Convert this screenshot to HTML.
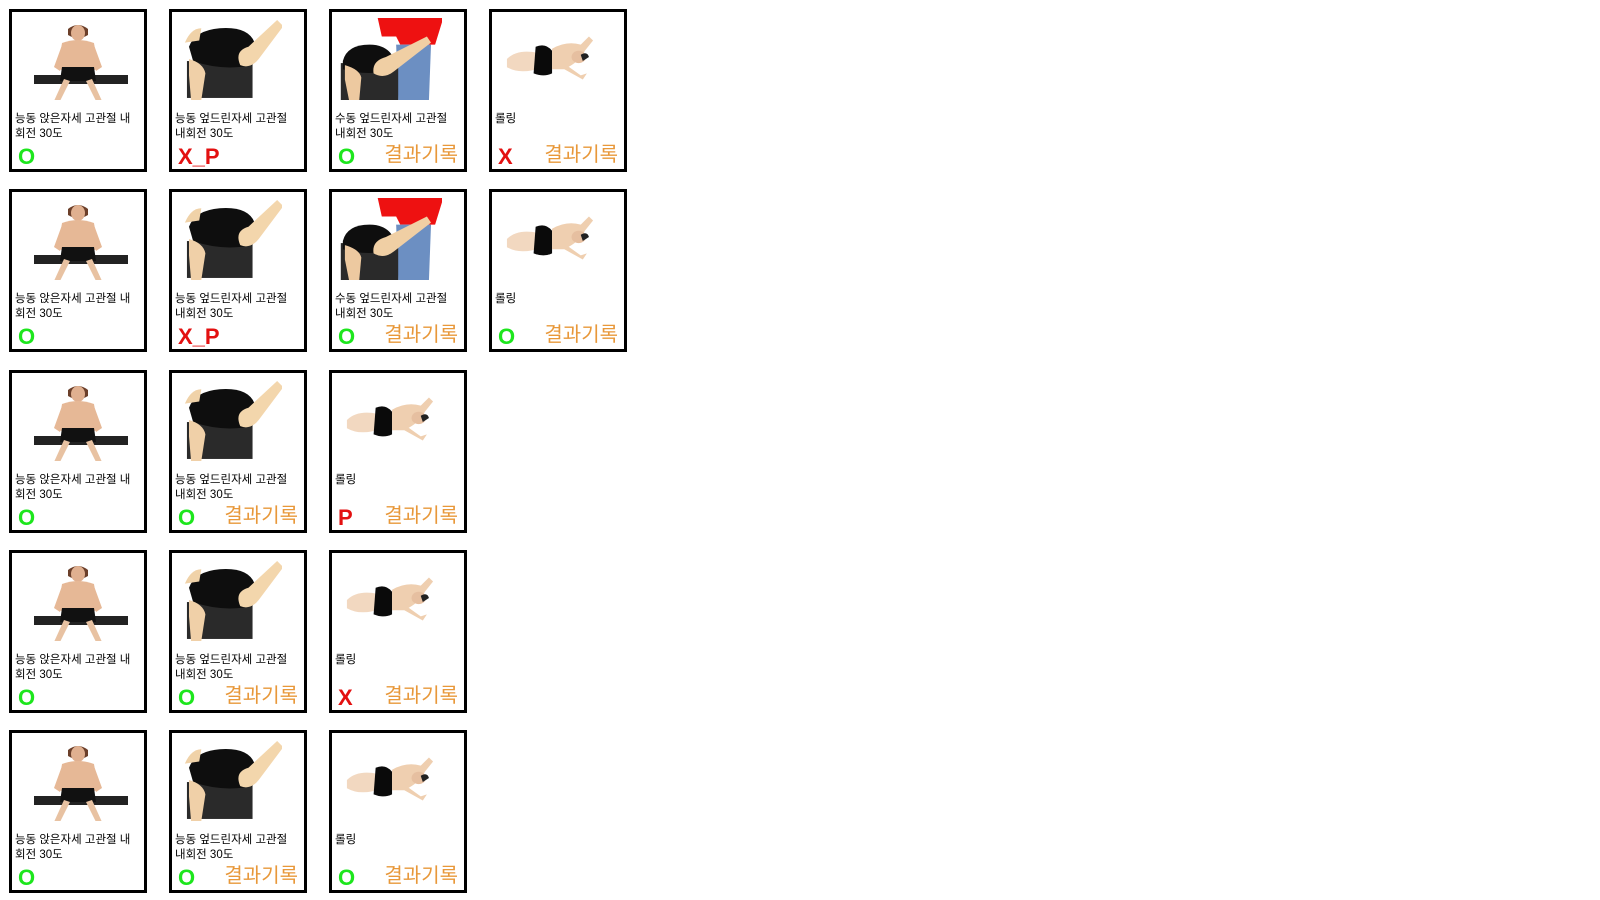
<!DOCTYPE html>
<html><head><meta charset="utf-8"><style>
body{margin:0;background:#fff;width:1600px;height:900px;position:relative;overflow:hidden;font-family:"Liberation Sans","Noto Sans CJK KR","NanumGothic",sans-serif}
.c{position:absolute;width:132px;height:157px;border:3px solid #000;background:#fff}
.c svg{position:absolute;left:2px;top:3px}
.t{position:absolute;left:3px;top:100px;font-size:11.5px;line-height:15px;color:#000;white-space:nowrap}
.s{position:absolute;left:6px;top:134px;font-size:22px;font-weight:bold;line-height:22px}
.g{color:#1de61d}.r{color:#e31010}
.k{position:absolute;right:6px;top:132px;font-size:20px;line-height:22px;color:#e8983a}
</style></head><body>
<svg width="0" height="0" style="position:absolute">
<defs>
<symbol id="A" viewBox="0 0 100 80">
<rect x="6" y="56" width="94" height="9" fill="#222"/>
<path d="M40 10 q10-8 20 0 l0 6 q-10 6 -20 0z" fill="#6b3f2a"/>
<ellipse cx="50" cy="14" rx="7" ry="8" fill="#e0b090"/>
<path d="M34 24 q16-6 32 0 l4 26 q-20 6 -40 0z" fill="#e6b896"/>
<path d="M34 26 l-8 22 6 4 6-18z M66 26 l8 22 -6 4 -6-18z" fill="#e6b896"/>
<path d="M34 48 h32 l2 14 h-36z" fill="#111"/>
<path d="M36 60 l-10 22 6 0 10-20z M64 60 l10 22 -6 0 -10-20z" fill="#e8c2a2"/>
</symbol>
<symbol id="B" viewBox="0 0 100 80">
<rect x="8" y="42" width="64" height="36" fill="#2a2a2a"/>
<path d="M10 28 q6-16 30-18 q28-2 34 14 l-2 22 q-30 6 -58-4z" fill="#0e0e0e"/>
<path d="M6 24 q6-14 16-14 l-2 12z" fill="#f0d2a8"/>
<path d="M60 46 q-6-14 8-18 l28-26 6 6 -24 32 q-8 10 -18 6z" fill="#f3d6ac"/>
<path d="M10 40 q14 4 16 14 l-4 26 -10 0 -2-24z" fill="#f0d0a8"/>
</symbol>
<symbol id="C" viewBox="0 0 100 80">
<path d="M38 0 h64 l-8 26 h-34 l-4 -8 h-14z" fill="#e11"/>
<path d="M56 26 h34 l-2 54 h-30z" fill="#6c8fc2"/>
<rect x="2" y="44" width="56" height="36" fill="#2a2a2a"/>
<path d="M4 42 q4-16 26-16 q18 0 24 14 l-6 12 q-24 4 -44-2z" fill="#0e0e0e"/>
<path d="M34 54 q-2-12 12-16 l40-20 4 6 -36 28 q-10 8 -20 2z" fill="#f0cfa4"/>
<path d="M6 46 q14 4 16 12 l-2 22 -10 0 -4-20z" fill="#edc9a0"/>
</symbol>
<symbol id="D" viewBox="0 0 100 80">
<path d="M8 40 q10-10 30-6 l4 14 q-20 8 -34 0z" fill="#f2d8c0"/>
<path d="M36 28 q10-4 16 4 l0 22 q-8 4 -18 0z" fill="#0a0a0a"/>
<path d="M52 30 q14-8 28-4 l8-8 4 4 -8 10 q-4 10 -20 18 l-12 0z" fill="#efcfb0"/>
<ellipse cx="78" cy="38" rx="7" ry="6" fill="#e6bfa0"/>
<path d="M80 36 q6-4 8 2 l-6 4z" fill="#222"/>
<path d="M66 46 l14 10 6-2 -4 6 -18-10z" fill="#efcfb0"/>
</symbol>
</defs></svg>

<!-- Row 1 -->
<div class="c" style="left:9px;top:9px"><svg width="128" height="86"><use href="#A" x="14" y="3" width="100" height="82"/></svg><div class="t">능동 앉은자세 고관절 내<br>회전 30도</div><div class="s g">O</div></div>
<div class="c" style="left:169px;top:9px"><svg width="128" height="86"><use href="#B" x="4" y="3" width="104" height="82"/></svg><div class="t">능동 엎드린자세 고관절<br>내회전 30도</div><div class="s r">X_P</div></div>
<div class="c" style="left:329px;top:9px"><svg width="128" height="86"><use href="#C" x="4" y="3" width="104" height="82"/></svg><div class="t">수동 엎드린자세 고관절<br>내회전 30도</div><div class="s g">O</div><div class="k">결과기록</div></div>
<div class="c" style="left:489px;top:9px"><svg width="128" height="86"><use href="#D" x="4" y="3" width="104" height="82"/></svg><div class="t">롤링</div><div class="s r">X</div><div class="k">결과기록</div></div>
<!-- Row 2 -->
<div class="c" style="left:9px;top:189px"><svg width="128" height="86"><use href="#A" x="14" y="3" width="100" height="82"/></svg><div class="t">능동 앉은자세 고관절 내<br>회전 30도</div><div class="s g">O</div></div>
<div class="c" style="left:169px;top:189px"><svg width="128" height="86"><use href="#B" x="4" y="3" width="104" height="82"/></svg><div class="t">능동 엎드린자세 고관절<br>내회전 30도</div><div class="s r">X_P</div></div>
<div class="c" style="left:329px;top:189px"><svg width="128" height="86"><use href="#C" x="4" y="3" width="104" height="82"/></svg><div class="t">수동 엎드린자세 고관절<br>내회전 30도</div><div class="s g">O</div><div class="k">결과기록</div></div>
<div class="c" style="left:489px;top:189px"><svg width="128" height="86"><use href="#D" x="4" y="3" width="104" height="82"/></svg><div class="t">롤링</div><div class="s g">O</div><div class="k">결과기록</div></div>
<!-- Row 3 -->
<div class="c" style="left:9px;top:370px"><svg width="128" height="86"><use href="#A" x="14" y="3" width="100" height="82"/></svg><div class="t">능동 앉은자세 고관절 내<br>회전 30도</div><div class="s g">O</div></div>
<div class="c" style="left:169px;top:370px"><svg width="128" height="86"><use href="#B" x="4" y="3" width="104" height="82"/></svg><div class="t">능동 엎드린자세 고관절<br>내회전 30도</div><div class="s g">O</div><div class="k">결과기록</div></div>
<div class="c" style="left:329px;top:370px"><svg width="128" height="86"><use href="#D" x="4" y="3" width="104" height="82"/></svg><div class="t">롤링</div><div class="s r">P</div><div class="k">결과기록</div></div>
<!-- Row 4 -->
<div class="c" style="left:9px;top:550px"><svg width="128" height="86"><use href="#A" x="14" y="3" width="100" height="82"/></svg><div class="t">능동 앉은자세 고관절 내<br>회전 30도</div><div class="s g">O</div></div>
<div class="c" style="left:169px;top:550px"><svg width="128" height="86"><use href="#B" x="4" y="3" width="104" height="82"/></svg><div class="t">능동 엎드린자세 고관절<br>내회전 30도</div><div class="s g">O</div><div class="k">결과기록</div></div>
<div class="c" style="left:329px;top:550px"><svg width="128" height="86"><use href="#D" x="4" y="3" width="104" height="82"/></svg><div class="t">롤링</div><div class="s r">X</div><div class="k">결과기록</div></div>
<!-- Row 5 -->
<div class="c" style="left:9px;top:730px"><svg width="128" height="86"><use href="#A" x="14" y="3" width="100" height="82"/></svg><div class="t">능동 앉은자세 고관절 내<br>회전 30도</div><div class="s g">O</div></div>
<div class="c" style="left:169px;top:730px"><svg width="128" height="86"><use href="#B" x="4" y="3" width="104" height="82"/></svg><div class="t">능동 엎드린자세 고관절<br>내회전 30도</div><div class="s g">O</div><div class="k">결과기록</div></div>
<div class="c" style="left:329px;top:730px"><svg width="128" height="86"><use href="#D" x="4" y="3" width="104" height="82"/></svg><div class="t">롤링</div><div class="s g">O</div><div class="k">결과기록</div></div>
</body></html>
